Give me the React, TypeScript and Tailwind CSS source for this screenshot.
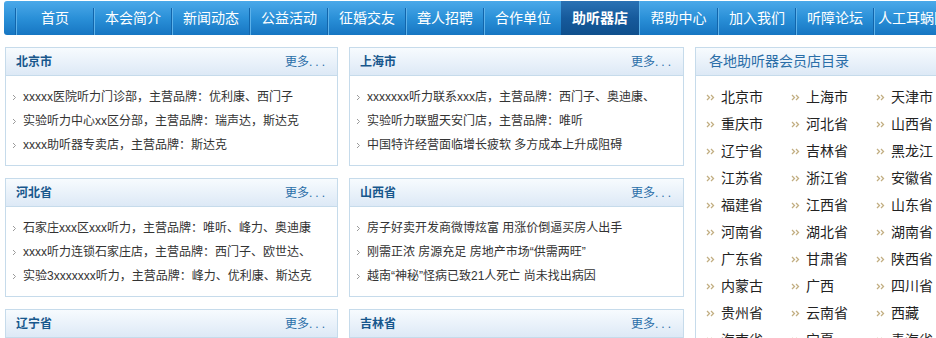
const navItems = ["首页", "本会简介", "新闻动态", "公益活动", "征婚交友", "聋人招聘", "合作单位", "助听器店", "帮助中心", "加入我们", "听障论坛", "人工耳蜗网"];

const panels = [
  [
    { title: "北京市", items: ["xxxxx医院听力门诊部，主营品牌：优利康、西门子", "实验听力中心xx区分部，主营品牌：瑞声达，斯达克", "xxxx助听器专卖店，主营品牌：斯达克"] },
    { title: "河北省", items: ["石家庄xxx区xxx听力，主营品牌：唯听、峰力、奥迪康", "xxxx听力连锁石家庄店，主营品牌：西门子、欧世达、", "实验3xxxxxxx听力，主营品牌：峰力、优利康、斯达克"] },
    { title: "辽宁省", items: [] },
  ],
  [
    { title: "上海市", items: ["xxxxxxx听力联系xxx店，主营品牌：西门子、奥迪康、", "实验听力联盟天安门店，主营品牌：唯听", "中国特许经营面临增长疲软 多方成本上升成阻碍"] },
    { title: "山西省", items: ["房子好卖开发商微博炫富 用涨价倒逼买房人出手", "刚需正浓 房源充足 房地产市场“供需两旺”", "越南“神秘”怪病已致21人死亡 尚未找出病因"] },
    { title: "吉林省", items: [] },
  ],
];

const regions = ["北京市", "上海市", "天津市", "重庆市", "河北省", "山西省", "辽宁省", "吉林省", "黑龙江", "江苏省", "浙江省", "安徽省", "福建省", "江西省", "山东省", "河南省", "湖北省", "湖南省", "广东省", "甘肃省", "陕西省", "内蒙古", "广西", "四川省", "贵州省", "云南省", "西藏", "海南省", "宁夏", "青海省"];

const Sep = () => (
  <div className="flex h-[27px] self-end">
    <div className="w-px bg-[#1265ab]" />
    <div className="w-px bg-[#5db2ea]" />
  </div>
);

const Panel = ({ title, items }: { title: string; items: string[] }) => (
  <div className="border border-[#c6dbeb] bg-white">
    <div className="flex h-[28px] items-center justify-between border-b border-[#c6dbeb] bg-gradient-to-b from-[#f7fbfe] to-[#dde9f6] pl-[10px] pr-[9px]">
      <span className="text-[12px] font-bold text-[#17578c]">{title}</span>
      <span className="text-[12px] text-[#2a6ea8]">
        更多<span className="tracking-[3px]">...</span>
      </span>
    </div>
    {items.length > 0 && (
      <ul className="pt-[9px] pb-[8px]">
        {items.map((t) => (
          <li key={t} className="flex h-[24px] items-center pl-[6px] text-[12px] text-[#333]">
            <svg width="5" height="7" viewBox="0 0 5 7" className="mr-[6px]">
              <path d="M1 1 L3.5 3.5 L1 6" stroke="#9a9a9a" strokeWidth="1" fill="none" />
            </svg>
            <span className="whitespace-nowrap">{t}</span>
          </li>
        ))}
      </ul>
    )}
  </div>
);

export default function App() {
  return (
    <div className="h-[338px] w-[936px] overflow-hidden bg-white" style={{ fontFamily: '"Liberation Sans", "Noto Sans CJK SC", sans-serif' }}>
      <div className="mt-[1px] ml-[4px] flex h-[34px] w-[1000px] items-stretch rounded-l-[3px] bg-gradient-to-b from-[#4aa9e9] via-[#2a90d8] to-[#1676c2]">
        <div className="w-[11px] shrink-0" />
        {navItems.map((n, i) => (
          <div key={n} className="flex shrink-0 items-stretch">
            {i !== 7 && i !== 8 && <Sep />}
            {i === 7 ? (
              <div className="flex w-[78px] items-center justify-center bg-gradient-to-b from-[#2a72b4] via-[#165a9c] to-[#0f4f8c] text-[14px] font-bold text-white">
                {n}
              </div>
            ) : (
              <div className={`flex items-center justify-center text-[14px] text-white ${i === 8 ? "w-[78px] border-l border-[#5db2ea]" : "w-[76px]"}`}>{n}</div>
            )}
          </div>
        ))}
      </div>

      <div className="mt-[12px] flex w-[1000px] gap-[11px] pl-[5px]">
        {panels.map((col, ci) => (
          <div key={ci} className={`flex shrink-0 flex-col gap-[12px] ${ci === 0 ? "w-[333px]" : "w-[335px]"}`}>
            {col.map((p) => (
              <Panel key={p.title} title={p.title} items={p.items} />
            ))}
          </div>
        ))}

        <div className="w-[260px] shrink-0 border border-[#c6dbeb] bg-white">
          <div className="flex h-[28px] items-center border-b border-[#c6dbeb] bg-gradient-to-b from-[#f7fbfe] to-[#dde9f6] pl-[13px]">
            <span className="text-[14px] text-[#2a6ea8]">各地助听器会员店目录</span>
          </div>
          <div className="grid grid-cols-[85px_85px_85px] pt-[8px] pl-[10px]">
            {regions.map((r) => (
              <div key={r} className="flex h-[27px] items-center text-[14px] text-[#222]">
                <svg width="9" height="7" viewBox="0 0 9 7" className="mr-[6px]">
                  <path d="M1 1 L3.5 3.5 L1 6 M5 1 L7.5 3.5 L5 6" stroke="#c2ae82" strokeWidth="1.3" fill="none" />
                </svg>
                <span className="whitespace-nowrap">{r}</span>
              </div>
            ))}
          </div>
        </div>
      </div>
    </div>
  );
}
